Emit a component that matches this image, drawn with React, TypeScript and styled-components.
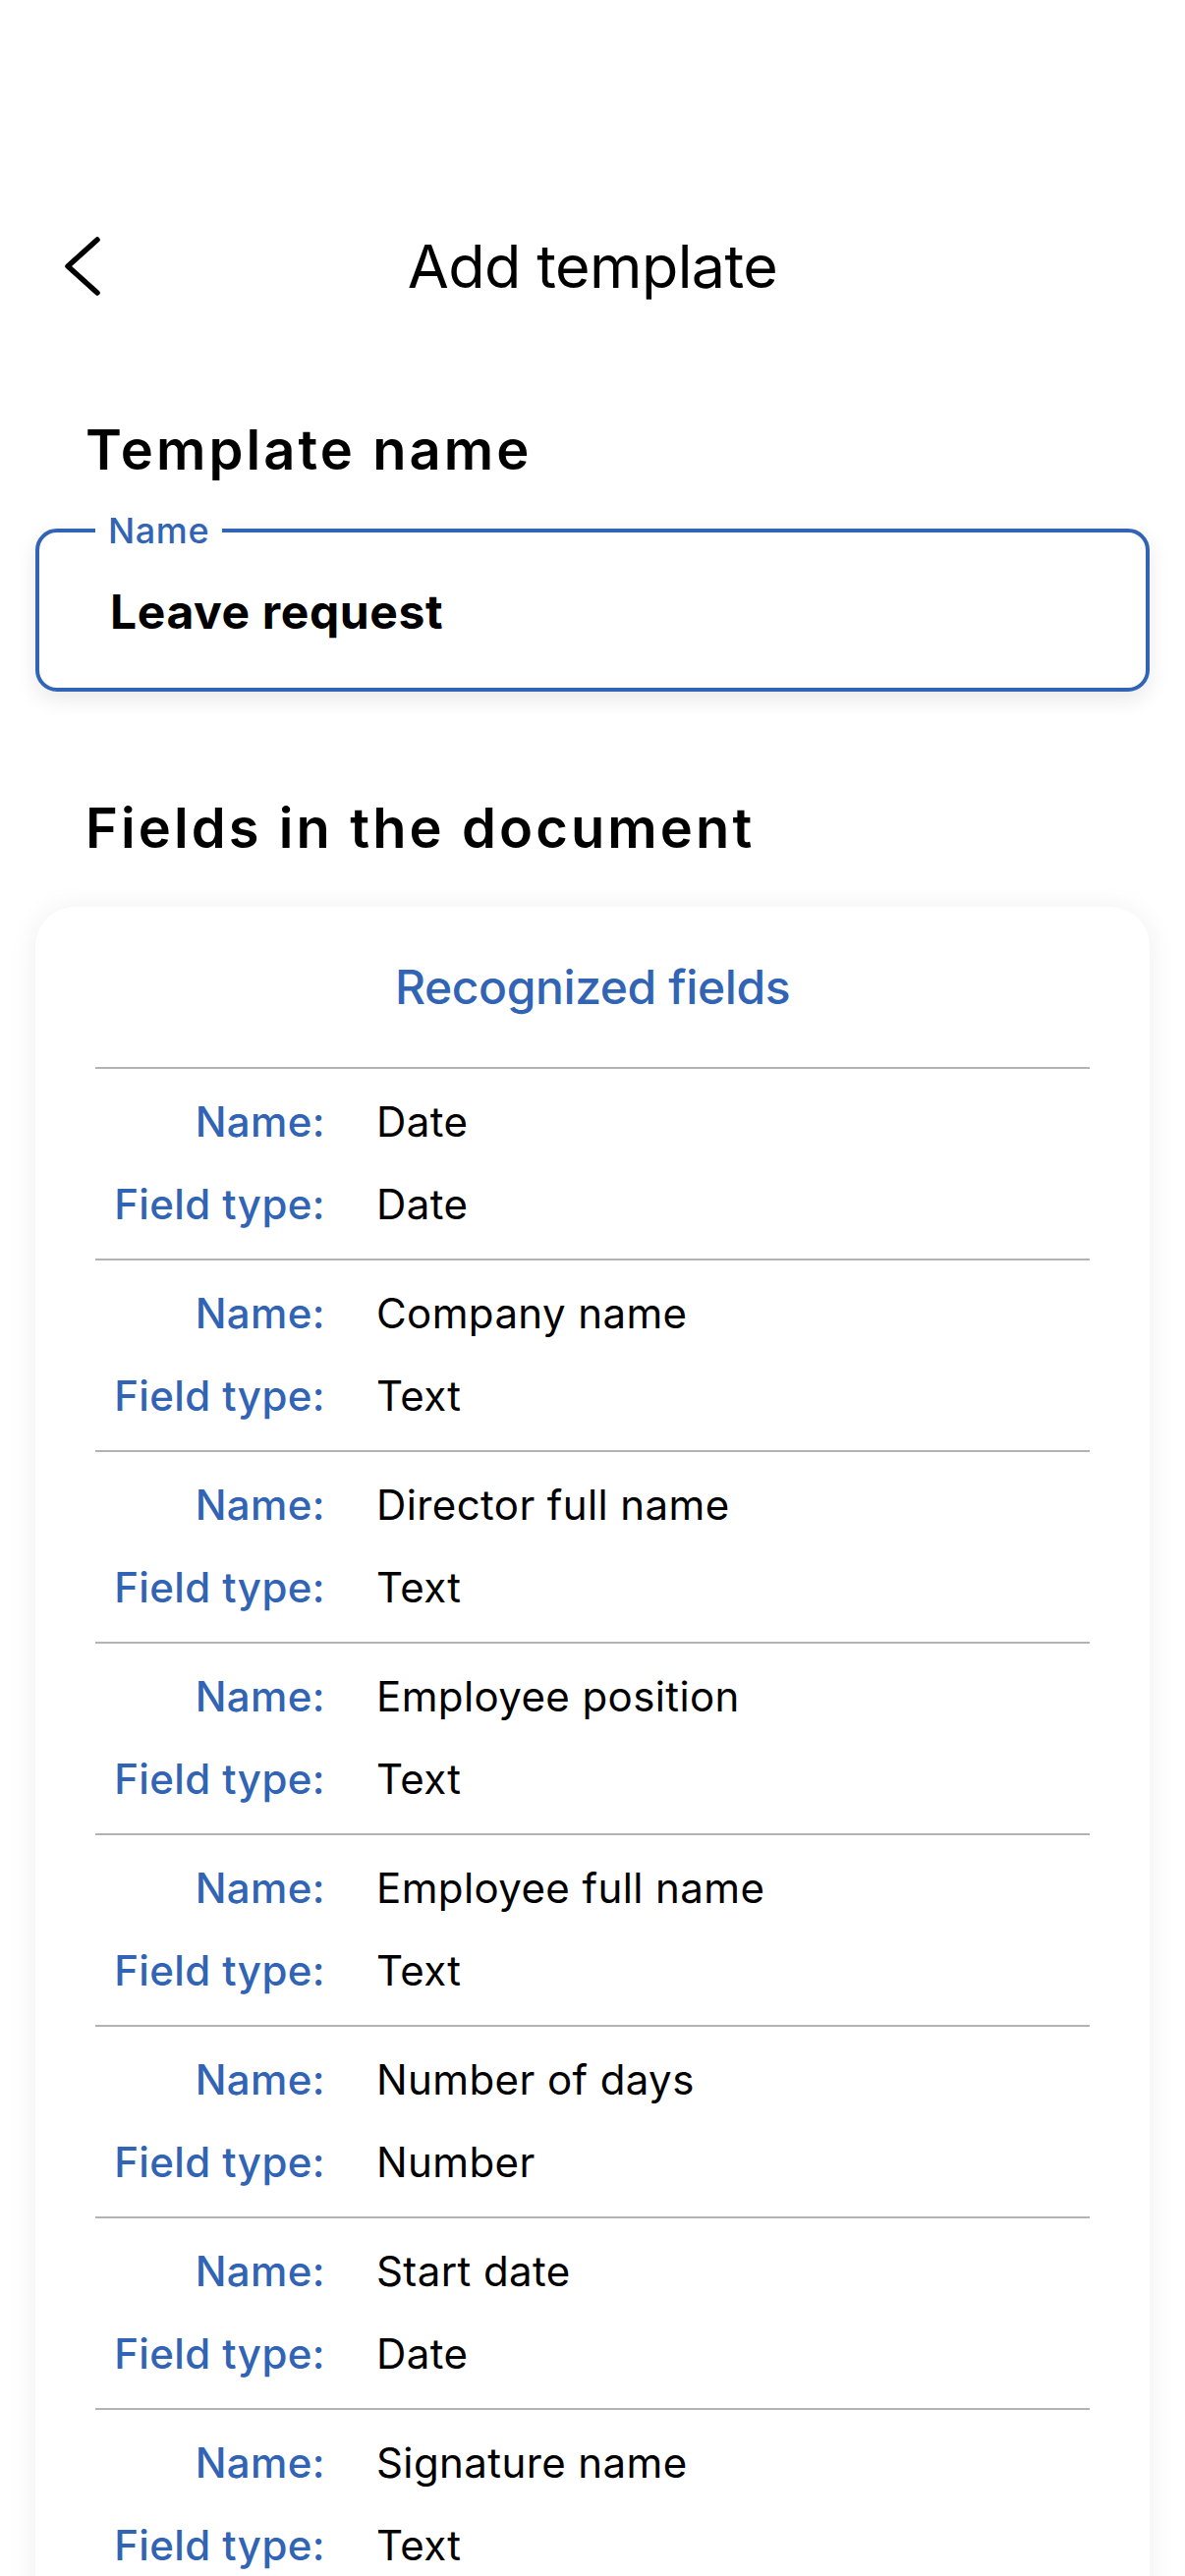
import React from "react";
import styled, { createGlobalStyle } from "styled-components";

const FIELDS = [
  { name: "Date", type: "Date" },
  { name: "Company name", type: "Text" },
  { name: "Director full name", type: "Text" },
  { name: "Employee position", type: "Text" },
  { name: "Employee full name", type: "Text" },
  { name: "Number of days", type: "Number" },
  { name: "Start date", type: "Date" },
  { name: "Signature name", type: "Text" }
];

const BLUE = "#3164b5";

const GlobalStyle = createGlobalStyle`
  html, body {
    margin: 0;
    padding: 0;
    background: #fff;
    overflow: hidden;
  }
  body {
    font-family: Inter, "Noto Sans", "Liberation Sans", sans-serif;
    color: #000;
  }
`;

const App = () => {
  return (
    <StyledScreen>
      <GlobalStyle />
      <StyledHeader>
        <StyledBackButton aria-label="Back">
          <svg width="42" height="62" viewBox="0 0 42 62" fill="none">
            <path
              d="M35 4 L5 31 L35 58"
              stroke="#000"
              strokeWidth="5.5"
              strokeLinecap="round"
              strokeLinejoin="round"
            />
          </svg>
        </StyledBackButton>
        <StyledTitle>Add template</StyledTitle>
        <span />
      </StyledHeader>

      <StyledSectionTitle>Template name</StyledSectionTitle>
      <StyledInputBox>
        <StyledInputLabel>Name</StyledInputLabel>
        <StyledInputValue>Leave request</StyledInputValue>
      </StyledInputBox>

      <StyledSectionTitle gap={105}>Fields in the document</StyledSectionTitle>
      <StyledCard>
        <StyledCardTitle>Recognized fields</StyledCardTitle>
        {FIELDS.map(field => (
          <StyledFieldRow key={field.name}>
            <StyledFieldLabel>Name:</StyledFieldLabel>
            <StyledFieldValue>{field.name}</StyledFieldValue>
            <StyledFieldLabel>Field type:</StyledFieldLabel>
            <StyledFieldValue>{field.type}</StyledFieldValue>
          </StyledFieldRow>
        ))}
      </StyledCard>
    </StyledScreen>
  );
};

export default App;

const StyledScreen = styled.div`
  height: 2622px;
  overflow: hidden;
  padding: 221px 36px 0;
  box-sizing: border-box;
`;

const StyledHeader = styled.div`
  display: grid;
  grid-template-columns: 1fr auto 1fr;
  align-items: center;
  height: 100px;
`;

const StyledBackButton = styled.button`
  justify-self: start;
  display: flex;
  align-items: center;
  padding: 0 0 0 28px;
  margin: 0;
  border: none;
  background: none;
`;

const StyledTitle = styled.div`
  font-size: 61px;
  line-height: 100px;
  font-weight: 400;
  letter-spacing: -0.6px;
`;

const StyledSectionTitle = styled.div<{ gap?: number }>`
  margin: ${p => p.gap ?? 103}px 0 46px 51px;
  font-size: 56px;
  line-height: 68px;
  font-weight: 600;
  letter-spacing: 3.1px;
`;

const StyledInputBox = styled.div`
  position: relative;
  height: 166px;
  box-sizing: border-box;
  border: 4px solid ${BLUE};
  border-radius: 22px;
  padding: 52px 72px 0;
  background: #fff;
  box-shadow: 0 8px 22px rgba(0, 0, 0, 0.09);
`;

const StyledInputLabel = styled.span`
  position: absolute;
  top: -20px;
  left: 57px;
  padding: 0 13px;
  background: #fff;
  color: ${BLUE};
  font-size: 36px;
  line-height: 36px;
  font-weight: 500;
  letter-spacing: 0.6px;
`;

const StyledInputValue = styled.div`
  font-size: 48px;
  line-height: 58px;
  font-weight: 700;
  letter-spacing: 0.6px;
`;

const StyledCard = styled.div`
  background: #fff;
  border-radius: 40px;
  padding: 53px 61px 60px;
  box-shadow: 0 2px 30px rgba(0, 0, 0, 0.07);
`;

const StyledCardTitle = styled.div`
  text-align: center;
  color: ${BLUE};
  font-size: 48px;
  line-height: 58px;
  font-weight: 500;
  letter-spacing: -0.4px;
  margin-bottom: 52px;
`;

const StyledFieldRow = styled.div`
  display: grid;
  grid-template-columns: 234px 1fr;
  column-gap: 52px;
  border-top: 2px solid #b3b3b3;
  padding: 12px 0 13px;
  font-size: 42px;
  line-height: 84px;
  letter-spacing: 0.4px;
`;

const StyledFieldLabel = styled.div`
  text-align: right;
  color: ${BLUE};
  font-weight: 500;
`;

const StyledFieldValue = styled.div`
  color: #000;
  font-weight: 400;
`;
